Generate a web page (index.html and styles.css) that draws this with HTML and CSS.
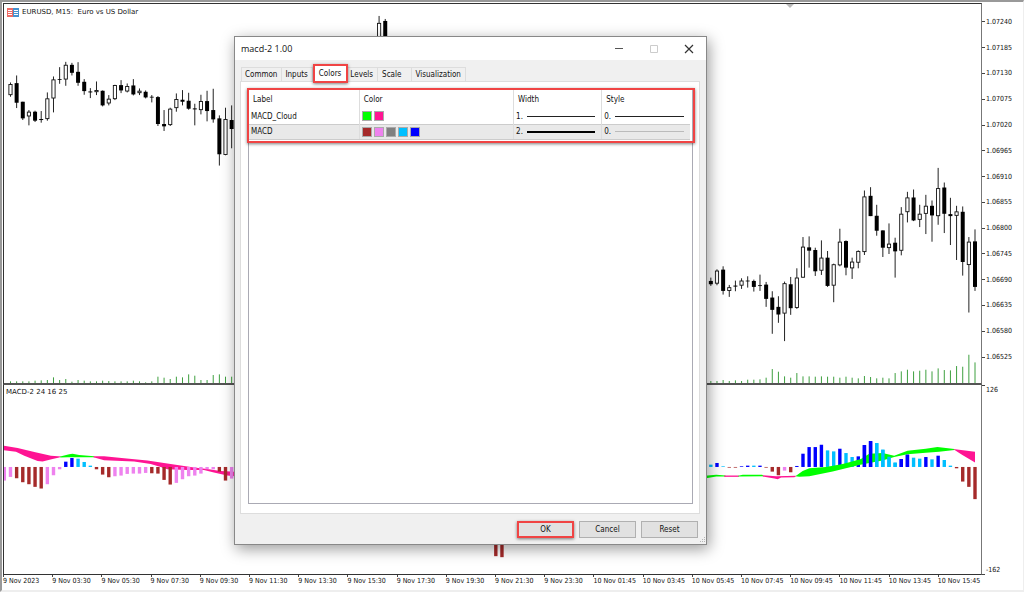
FILE: index.html
```html
<!DOCTYPE html>
<html lang="en">
<head>
<meta charset="utf-8">
<title>EURUSD, M15</title>
<link rel="stylesheet" href="styles.css">
</head>
<body>
<main class="terminal">
  <section class="pane price-pane">
    <svg class="plot" id="price" viewBox="3 3 979 380" preserveAspectRatio="none" aria-hidden="true"></svg>
    <header class="pane-title">
      <svg class="symbol-icon" viewBox="0 0 12 9" aria-hidden="true">
        <path fill="#ee6b66" d="M0 0h6v9H0z"/><path fill="#4592cf" d="M6 0h6v9H6z"/>
        <path stroke="#fff" fill="none" d="M1 2.5h4M1 4.5h4M1 6.500h4M7 2.500h4M7 4.500h4M7 6.500h4"/>
      </svg>
      <h1 class="symbol">EURUSD, M15:&nbsp; Euro vs US Dollar</h1>
    </header>
    <span class="shift-mark"></span>
  </section>
  <ol class="price-axis">
    <li>1.07240</li><li>1.07185</li><li>1.07130</li><li>1.07075</li><li>1.07020</li><li>1.06965</li><li>1.06910</li>
    <li>1.06855</li><li>1.06800</li><li>1.06745</li><li>1.06690</li><li>1.06635</li><li>1.06580</li><li>1.06525</li>
  </ol>
  <section class="pane macd-pane">
    <svg class="plot" id="macd" viewBox="3 385 979 190" preserveAspectRatio="none" aria-hidden="true"></svg>
    <h2 class="indicator">MACD-2 24 16 25</h2>
  </section>
  <ol class="macd-axis"><li>126</li><li>-162</li></ol>
  <ol class="time-axis">
    <li>9 Nov 2023</li><li>9 Nov 03:30</li><li>9 Nov 05:30</li><li>9 Nov 07:30</li><li>9 Nov 09:30</li>
    <li>9 Nov 11:30</li><li>9 Nov 13:30</li><li>9 Nov 15:30</li><li>9 Nov 17:30</li><li>9 Nov 19:30</li>
    <li>9 Nov 21:30</li><li>9 Nov 23:30</li><li>10 Nov 01:45</li><li>10 Nov 03:45</li><li>10 Nov 05:45</li>
    <li>10 Nov 07:45</li><li>10 Nov 09:45</li><li>10 Nov 11:45</li><li>10 Nov 13:45</li><li>10 Nov 15:45</li>
  </ol>
</main>

<div class="dialog" role="dialog" aria-labelledby="dialog-title">
  <div class="titlebar">
    <h2 class="dialog-title" id="dialog-title">macd-2 1.00</h2>
    <button class="win-btn" aria-label="Minimize"><svg viewBox="0 0 10 10"><path d="M1 4.500h8" stroke="#555"/></svg></button>
    <button class="win-btn" aria-label="Maximize" disabled><svg viewBox="0 0 10 10"><path d="M1.500 1.500h7v7h-7z" stroke="#ccc" fill="none"/></svg></button>
    <button class="win-btn" aria-label="Close"><svg viewBox="0 0 10 10"><path d="M1 1l8 8M9 1L1 9" stroke="#333" stroke-width="1.200"/></svg></button>
  </div>
  <div class="tabs" role="tablist">
    <button class="tab" role="tab">Common</button>
    <button class="tab" role="tab">Inputs</button>
    <button class="tab current" role="tab" aria-selected="true">Colors</button>
    <button class="tab" role="tab">Levels</button>
    <button class="tab wide" role="tab">Scale</button>
    <button class="tab" role="tab">Visualization</button>
  </div>
  <div class="panel" role="tabpanel">
    <div class="list">
      <div class="marked">
        <table class="plots">
          <colgroup><col class="c-label"><col class="c-color"><col class="c-width"><col class="c-style"></colgroup>
          <thead><tr><th>Label</th><th>Color</th><th>Width</th><th>Style</th></tr></thead>
          <tbody>
            <tr>
              <td>MACD_Cloud</td>
              <td><div class="swatches"><i class="sw lime"></i><i class="sw pink"></i></div></td>
              <td><div class="sample">1.<i class="line"></i></div></td>
              <td><div class="sample">0.<i class="line"></i></div></td>
            </tr>
            <tr class="selected">
              <td>MACD</td>
              <td><div class="swatches"><i class="sw brown"></i><i class="sw violet"></i><i class="sw gray"></i><i class="sw sky"></i><i class="sw blue"></i></div></td>
              <td><div class="sample">2.<i class="line thick"></i></div></td>
              <td><div class="sample">0.<i class="line faint"></i></div></td>
            </tr>
          </tbody>
        </table>
      </div>
    </div>
  </div>
  <div class="actions">
    <button class="btn primary">OK</button>
    <button class="btn">Cancel</button>
    <button class="btn">Reset</button>
  </div>
  <svg class="grip" viewBox="0 0 7 7" aria-hidden="true"><path fill="#b5b5b5" d="M5 0h1v1h-1zM3 2h1v1h-1zM5 2h1v1h-1zM1 4h1v1h-1zM3 4h1v1h-1zM5 4h1v1h-1z"/></svg>
</div>
<script src="chart.js"></script>
</body>
</html>
```
FILE: styles.css
```css
* { box-sizing: border-box; }

body {
  margin: 0;
  background: #fff;
  color: #111;
  font-family: "DejaVu Sans Condensed", "DejaVu Sans", Tahoma, sans-serif;
  font-size: 8px;
}

h1, h2, ol { margin: 0; padding: 0; font-weight: normal; list-style: none; }
button { font: inherit; color: inherit; padding: 0; }

.terminal {
  display: grid;
  grid-template-columns: 1fr 41px;
  grid-template-rows: 382fr 190fr 15px;
  height: 100vh;
  min-height: 400px;
  padding: 1px 0 0 1px;
  border-top: 2px solid #999;
  border-left: 2px solid #999;
  border-right: 1px solid #eee;
  border-bottom: 2px solid #eee;
}

.pane {
  position: relative;
  min-width: 0;
  min-height: 0;
  border-left: 1px solid #333;
  border-right: 1px solid #777;
}
.price-pane { border-top: 1px solid #333; border-bottom: 2px solid #555; }
.macd-pane { border-bottom: 1px solid #333; }

.plot { position: absolute; inset: 0; width: 100%; height: 100%; }

.pane-title { position: relative; display: flex; align-items: center; gap: 3px; padding: 3px; }
.symbol-icon { width: 12px; height: 9px; }
.symbol, .indicator { font-family: "DejaVu Sans", Tahoma, sans-serif; font-size: 7px; line-height: 10px; }
.indicator { position: relative; padding: 2px; }

.shift-mark {
  position: absolute;
  top: 0;
  left: 80%;
  border: 4px solid transparent;
  border-top-color: #bbb;
  border-bottom: 0;
}

.price-axis, .macd-axis { display: flex; flex-direction: column; font-size: 7px; line-height: 10px; }
.price-axis { padding: 6px 0 15px; }
.price-axis li { flex: 1; display: flex; align-items: center; gap: 1px; }
.price-axis li::before, .macd-axis li::before { content: ""; width: 3px; height: 1px; background: #444; }
.macd-axis { justify-content: space-between; }
.macd-axis li { display: flex; gap: 1px; }
.macd-axis li:last-child { align-items: flex-end; }

.time-axis {
  grid-column: 1 / -1;
  display: flex;
  padding-right: 36px;
  font-size: 7px;
  line-height: 13px;
  white-space: nowrap;
}
.time-axis li { flex: 1; min-width: 0; }
.time-axis li::before { content: ""; display: block; width: 1px; height: 2px; margin: 0 0 -2px; background: #444; }

.dialog {
  position: absolute;
  left: 234px;
  top: 36px;
  width: 473px;
  height: 509px;
  display: flex;
  flex-direction: column;
  background: #f0f0f0;
  border: 1px solid #888;
  box-shadow: 2px 4px 14px rgba(0, 0, 0, .4);
}

.titlebar { display: flex; align-items: center; height: 23px; padding-left: 6px; background: #fff; }
.dialog-title { flex: 1; font-family: "Open Sans", "Noto Sans", sans-serif; font-size: 9px; line-height: 12px; }
.win-btn { width: 35px; height: 22px; border: 0; background: none; }
.win-btn svg { display: block; width: 10px; height: 10px; margin: auto; }

.tabs { display: flex; align-items: flex-end; height: 21px; padding-left: 6px; }
.tab { height: 14px; padding: 0 4px 0 3px; border: 1px solid #ddd; border-width: 1px 1px 0 0; background: #f0f0f0; line-height: 13px; }
.tab:first-child { border-left-width: 1px; }
.tab.wide { padding: 0 10px 0 4px; }
.tab.current {
  position: relative;
  height: 19px;
  margin: 0 -1px -2px 0;
  padding: 0 5px 1px 4px;
  border: 2px solid #f04444;
  background: #fff;
  box-shadow: 0 1px 3px rgba(0, 0, 0, .5);
}

.panel { flex: 1; margin: 0 6px 0 5px; padding: 7px 6px 9px 7px; border: 1px solid #ddd; background: #fff; }
.list { height: 100%; border: 1px solid #aaaab4; }

.marked { margin: -2px -3px 0 -2px; padding: 0 3px 1px 0; border: 2px solid #f04444; box-shadow: 0 1px 3px rgba(0, 0, 0, .5); }
.plots { width: 100%; table-layout: fixed; border-collapse: collapse; }
.c-label { width: 25%; }
.c-color { width: 35%; }
.c-width { width: 20%; }
.c-style { width: 20%; }
.plots th, .plots td { padding: 0 6px 0 2px; font-weight: normal; text-align: left; border-left: 1px solid #ddd; }
.plots th:first-child, .plots td:first-child { border-left: 0; }
.plots th { height: 19px; padding-left: 4px; }
.plots td { height: 15px; }
.selected td { background: #e9e9e9; border-top: 1px solid #ccc; border-bottom: 1px solid #ccc; }

.swatches { display: flex; gap: 2px; }
.sw { width: 10px; height: 10px; border: 1px solid #aaa; }
.lime { background: #0f0; }
.pink { background: #ff1493; }
.brown { background: #a52a2a; }
.violet { background: #ee82ee; }
.gray { background: #808080; }
.sky { background: #00bfff; }
.blue { background: #00f; }

.sample { display: flex; align-items: center; gap: 4px; }
.line { flex: 1; height: 1px; background: #222; }
.line.thick { height: 2px; background: #000; }
.line.faint { background: #bbb; }

.actions { display: flex; justify-content: flex-end; gap: 5px; padding: 7px 8px 6px; }
.btn { width: 57px; height: 17px; border: 1px solid #b0b0b0; background: #e1e1e1; }
.btn.primary { border: 2px solid #f04444; box-shadow: 0 1px 3px rgba(0, 0, 0, .5); }

.grip { position: absolute; right: 0; bottom: 0; width: 7px; height: 7px; }
```
FILE: chart.js
```js
// Heights are stored in thirds of a chart unit.
const NS = "http://www.w3.org/2000/svg";
const barX = i => 9.5 + 6.156 * i;

function add(svg, tag, attrs) {
  const el = document.createElementNS(NS, tag);
  for (const name in attrs) el.setAttribute(name, attrs[name]);
  svg.appendChild(el);
}

// [rising, high, body top, body bottom, low]
const early = [
  [1,245,250,283,288],[0,224,247,306,322],[0,303,303,353,358],[1,328,333,347,374],[0,330,333,360,364],[0,331,355,358,366],
  [1,275,293,355,360],[1,227,236,293,335],[0,199,235,237,249],[1,183,192,236,255],[0,186,192,216,224],[0,184,213,246,255],
  [0,235,243,271,282],[0,262,272,275,292],[1,242,268,274,283],[0,269,270,314,317],[1,283,294,308,314],[1,252,253,295,298],
  [0,238,253,269,277],[1,248,256,272,275],[0,235,254,281,284],[1,263,270,277,283],[0,269,273,290,293],[0,283,288,290,305],
  [0,286,289,370,376],[0,328,370,377,391],[1,321,324,373,376],[1,278,295,322,333],[0,268,297,303,314],[0,276,300,324,327],
  [0,309,323,326,374],[1,282,301,328,341],[0,270,301,331,362],[0,264,328,356,366],[0,344,353,461,495],[1,321,355,463,464],
  [0,314,358,385,443]];
const midday = [[1,45,66,130,140],[0,54,60,130,140]];
const late = [
  [0,832,842,852,857],[1,807,811,850,855],[0,798,808,872,883],[1,854,861,872,890],[0,841,856,859,873],[1,834,841,856,866],
  [0,828,841,842,862],[0,838,842,860,874],[0,823,855,857,872],[0,845,853,896,920],[0,873,892,929,1001],[0,888,920,943,968],
  [1,844,849,940,1023],[0,830,852,924,944],[1,804,832,923,926],[1,710,739,832,832],[0,708,741,751,802],[0,742,749,813,827],
  [1,720,772,811,824],[0,752,772,857,860],[1,790,792,856,906],[1,685,724,795,798],[0,720,722,802,825],[1,772,784,804,836],
  [1,750,752,787,804],[1,570,588,755,764],[0,560,586,647,647],[0,613,646,691,706],[0,690,690,742,770],[1,669,730,743,761],
  [0,712,727,753,832],[1,620,640,751,765],[1,574,591,635,666],[0,567,591,660,662],[1,613,640,658,680],[1,583,616,640,701],
  [0,600,616,645,724],[1,502,563,647,673],[0,546,561,640,698],[0,592,641,647,734],[1,616,633,646,779],[0,618,634,785,826],
  [1,710,724,794,937],[0,687,723,860,872]];

const volEarly = [5,5,5,5,7,8,9,17,9,12,4,9,7,5,5,7,6,5,5,5,7,5,2,5,19,16,12,19,17,26,22,9,9,24,26,19,19];
const volLate = [6,6,9,6,8,6,10,10,11,16,42,34,20,16,30,20,20,19,20,19,19,16,19,16,14,21,18,14,16,14,30,35,40,35,37,40,35,44,39,38,51,49,85,62];

const price = document.getElementById("price");
function candles(start, rows) {
  rows.forEach(([up, hi, top, bottom, lo], k) => {
    const x = barX(start + k);
    add(price, "path", { d: `M${x} ${hi / 3}V${lo / 3}`, stroke: "#222", "stroke-width": 1 });
    const inset = up ? 0.4 : 0;
    add(price, "rect", {
      x: x - 2 + inset, y: top / 3 + inset, width: 4 - 2 * inset,
      height: Math.max((bottom - top) / 3 - 2 * inset, 0.8),
      fill: up ? "#fff" : "#000", stroke: up ? "#111" : "none", "stroke-width": 0.9
    });
  });
}
function volumes(start, heights) {
  heights.forEach((h, k) => add(price, "rect", {
    x: barX(start + k) - 0.5, y: 383 - h / 3, width: 1, height: h / 3, fill: "#3fa040" }));
}
candles(0, early);
candles(60, midday);
candles(114, late);
volumes(0, volEarly);
volumes(114, volLate);

const macd = document.getElementById("macd");
const cloud = (fill, points) => add(macd, "polygon", { fill, points, transform: "scale(.333333)" });
const PINK = "#ff1493", LIME = "#00ff00";

// [colour, offset from zero: positive is up]
const COLORS = { n: "#a52a2a", v: "#ee82ee", s: "#00bfff", b: "#0000ff" };
const histEarly = "v-41 v-30 n-34 n-46 n-52 n-60 n-65 v-52 v-25 v-7 b16 b27 s25 s15 s4 n-7 n-23 n-31 v-28 v-26 v-21 v-20 v-20 v-18 n-19 n-20 n-39 n-53 v-48 v-37 v-28 v-26 v-20 v-7 v-7 n-14 n-41 v-35 n-36";
const histMid = "n-269 n-272 v-235";
const histLate = "s7 b12 s2 n-2 n-2 b2 b4 s4 b4 n-2 n-14 n-25 v-11 n-16 b3 b40 b60 b60 b67 s50 s47 b55 s42 s30 b32 b66 b78 s72 s52 s31 s13 b24 b37 s28 s25 b30 s23 b34 s21 s4 n-4 n-44 n-60 n-97";
function histogram(start, text) {
  text.split(" ").forEach((item, k) => {
    const h = Number(item.slice(1)) / 3;
    add(macd, "rect", { x: barX(start + k) - 1.7, y: h > 0 ? 467.4 - h : 467.4,
      width: 3.4, height: Math.abs(h), fill: COLORS[item[0]] });
  });
}

cloud(PINK, "9,1338 50,1345 100,1357 150,1368 182,1371 175,1374 155,1378 125,1386 110,1384 70,1368 45,1356 9,1352");
cloud(LIME, "178,1371 205,1364 215,1362 235,1366 280,1370 282,1373 200,1373 178,1374");
cloud(PINK, "278,1370 310,1370 370,1376 440,1383 490,1390 540,1398 580,1404 620,1408 660,1414 690,1416 720,1418 720,1432 680,1428 640,1419 610,1411 560,1411 500,1409 480,1402 450,1393 400,1386 310,1382 278,1373");
cloud(LIME, "2115,1429 2150,1426 2178,1428 2178,1431 2150,1431 2115,1437");
cloud(PINK, "2174,1428 2218,1428 2218,1432 2174,1432");
cloud(LIME, "2216,1429 2230,1426 2288,1426 2294,1430 2216,1431");
cloud(PINK, "2290,1427 2330,1430 2392,1429 2385,1433 2345,1434 2335,1439 2325,1437 2290,1431");
histogram(-1, histEarly);
histogram(79, histMid);
histogram(114, histLate);
cloud(LIME, "2388,1430 2410,1414 2430,1406 2480,1402 2530,1393 2550,1388 2585,1378 2610,1362 2650,1360 2685,1368 2725,1353 2780,1347 2815,1342 2866,1348 2866,1351 2820,1356 2780,1359 2725,1364 2685,1372 2650,1383 2610,1390 2580,1396 2500,1416 2430,1430 2400,1432");
cloud(PINK, "2862,1348 2928,1356 2928,1389 2890,1366");
// The rising stretch of the histogram stays in front of the cloud.
histogram(139, "b66 b78 s72 s52 s31 s13 b24 b37");
```
